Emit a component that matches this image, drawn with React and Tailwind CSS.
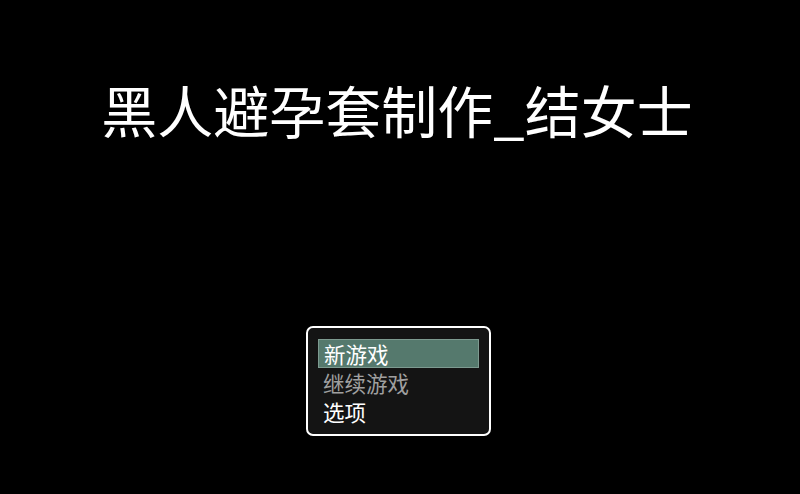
export default function App() {
  const items = [
    {label: '新游戏', active: true},
    {label: '继续游戏', disabled: true},
    {label: '选项'},
  ]

  return (
    <main
      className="w-[800px] h-[494px] bg-black overflow-hidden flex flex-col items-center"
      style={{fontFamily: '"Noto Sans CJK SC", "Noto Sans", sans-serif'}}
    >
      <h1 className="mt-[81px] text-[56px] leading-none text-white tracking-normal ml-[-6px]">
        黑人避孕套制作_结女士
      </h1>
      <div className="mt-[189px] ml-[-3px] w-[185px] h-[110px] rounded-[7px] border-2 border-white bg-[#141414] px-[10px] pt-[11px]">
        {items.map((it) => (
          <div
            key={it.label}
            className={
              'h-[29px] pl-[5px] flex items-center text-[21.5px] leading-none ' +
              (it.active
                ? 'bg-[#55796d] border border-[#7d9a90] text-white'
                : it.disabled
                ? 'text-[#a0a0a0]'
                : 'text-white')
            }
          >
            {it.label}
          </div>
        ))}
      </div>
    </main>
  )
}
